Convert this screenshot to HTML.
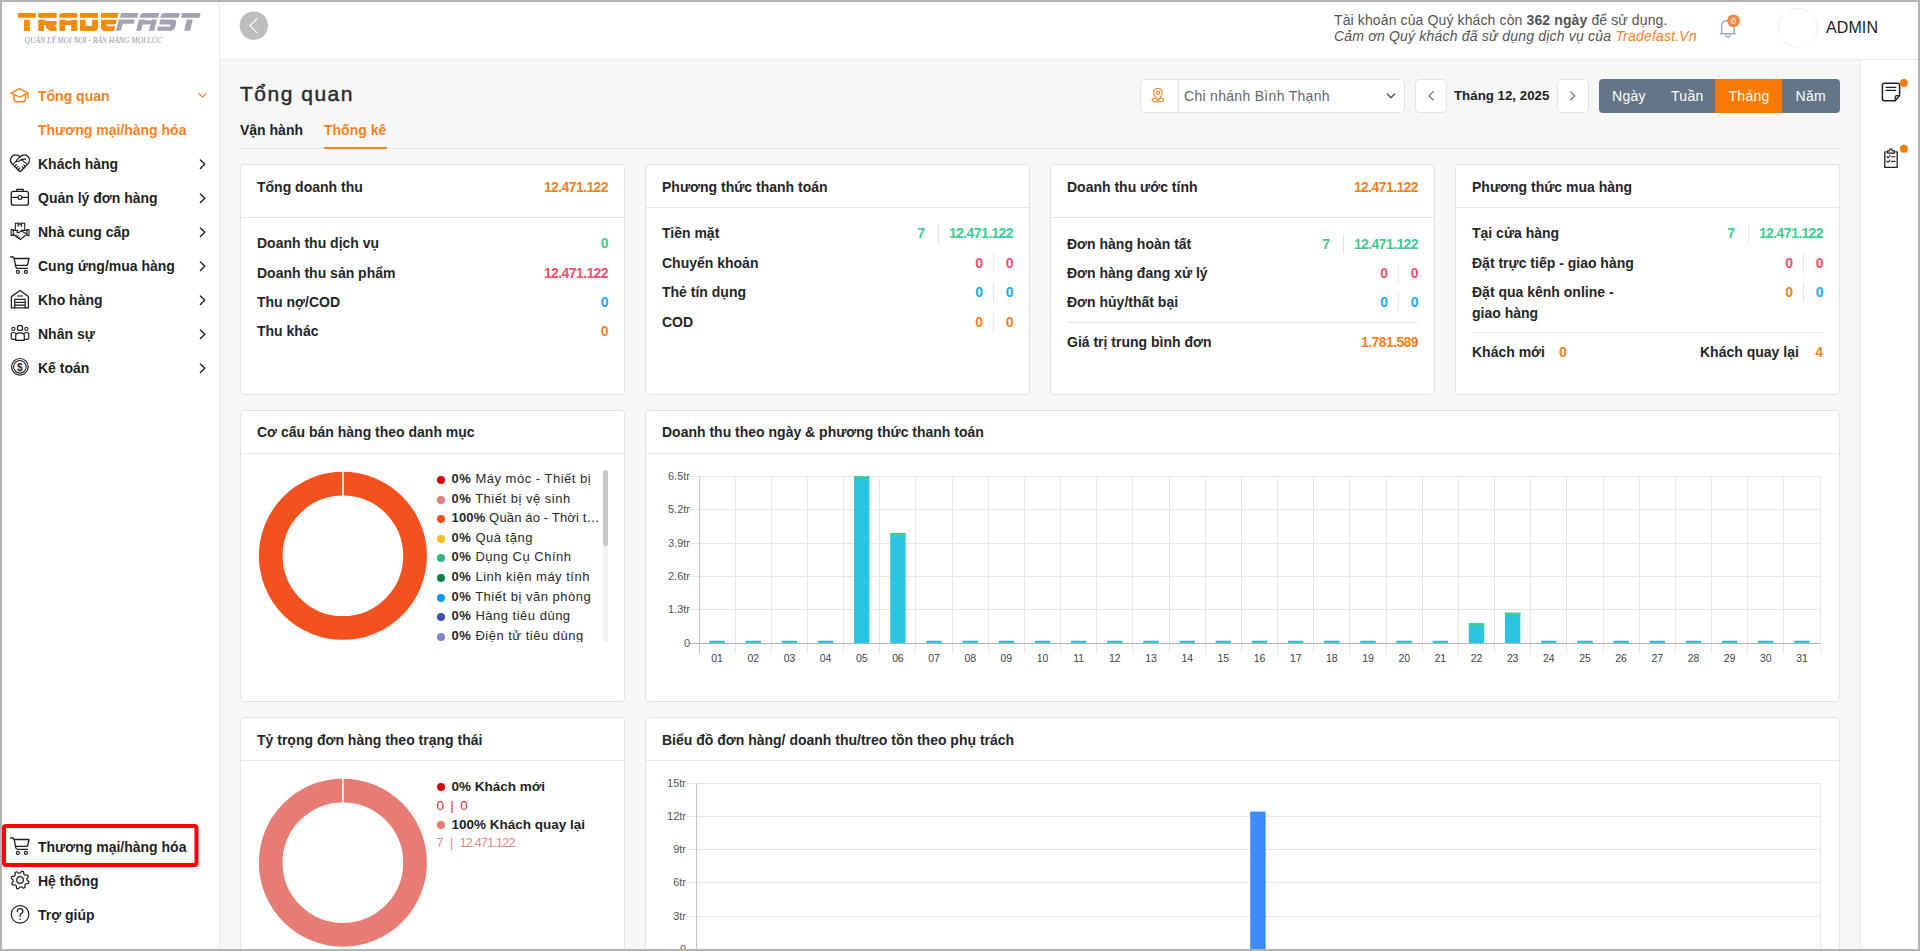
<!DOCTYPE html><html><head><meta charset="utf-8"><style>
*{box-sizing:border-box;margin:0;padding:0}
html,body{width:1920px;height:951px;overflow:hidden;background:#f7f7f7}
body{font-family:"Liberation Sans",sans-serif;color:#222;position:relative}
.a{position:absolute;white-space:nowrap}
.bd{position:absolute;background:#b3b3b3;z-index:50}
.side{position:absolute;left:2px;top:2px;width:218px;height:947px;background:#fff;border-right:1px solid #e9e9e9}
.hdr{position:absolute;left:220px;top:2px;width:1698px;height:58px;background:#fff;border-bottom:1px solid #e9e9e9}
.rside{position:absolute;left:1860px;top:60px;width:58px;height:889px;background:#fff;border-left:1px solid #e9e9e9}
.mi{position:absolute;left:38px;height:34px;line-height:34px;font-size:14px;font-weight:700;color:#1f1f1f;white-space:nowrap}
.card{position:absolute;background:#fff;border:1px solid #e3e3e3;border-radius:4px;overflow:hidden}
.ct{position:absolute;left:15px;font-size:14px;font-weight:700;color:#222;white-space:nowrap;line-height:20px}
.hl{position:absolute;height:1px;background:#e6e6e6}
.lb{position:absolute;font-size:14px;font-weight:700;color:#222;white-space:nowrap;line-height:20px}
.num{position:absolute;font-size:14px;font-weight:700;white-space:nowrap;line-height:20px;letter-spacing:-0.6px}
.vs{position:absolute;width:1px;height:19px;background:#e2e2e2}
.org{color:#f5821f}.grn{color:#3dcc91}.red{color:#f0506e}.blu{color:#1ea7fd}
.yl{position:absolute;font-size:11px;color:#555;line-height:12px;text-align:right;width:40px;white-space:nowrap}
.xl{position:absolute;font-size:10.5px;color:#444;line-height:12px;text-align:center;width:30px;white-space:nowrap;letter-spacing:-0.1px}
.lg{position:absolute;left:451px;font-size:13px;color:#222;white-space:nowrap;line-height:16px}
.lg b{font-weight:700}
</style></head><body>
<div class="bd" style="left:0;top:0;width:1920px;height:2px"></div>
<div class="bd" style="left:0;top:949px;width:1920px;height:2px"></div>
<div class="bd" style="left:0;top:0;width:2px;height:951px"></div>
<div class="bd" style="left:1918px;top:0;width:2px;height:951px"></div>
<div class="side"></div><div class="hdr"></div><div class="rside"></div>
<div class="mi" style="top:79.05px;color:#f5821f">Tổng quan</div>
<div class="mi" style="top:113.35px;color:#f5821f">Thương mại/hàng hóa</div>
<div class="mi" style="top:147.35px">Khách hàng</div>
<div class="mi" style="top:181.35px">Quản lý đơn hàng</div>
<div class="mi" style="top:215.35px">Nhà cung cấp</div>
<div class="mi" style="top:249.35px">Cung ứng/mua hàng</div>
<div class="mi" style="top:283.35px">Kho hàng</div>
<div class="mi" style="top:317.35px">Nhân sự</div>
<div class="mi" style="top:351.35px">Kế toán</div>
<div class="mi" style="top:829.75px">Thương mại/hàng hóa</div>
<div class="mi" style="top:863.85px">Hệ thống</div>
<div class="mi" style="top:898.15px">Trợ giúp</div>
<div class="a" style="left:1334px;top:10.35px;font-size:14px;font-weight:400;color:#555;line-height:20px;letter-spacing:0.12px">Tài khoản của Quý khách còn <b>362 ngày</b> để sử dụng.</div>
<div class="a" style="left:1334px;top:25.95px;font-size:14px;font-weight:400;color:#555;line-height:20px;font-style:italic;letter-spacing:0.2px">Cảm ơn Quý khách đã sử dụng dịch vụ của <span style="color:#f5821f">Tradefast.Vn</span></div>
<div class="a" style="left:1826px;top:17.96px;font-size:16px;font-weight:400;color:#222;line-height:20px;letter-spacing:0.1px">ADMIN</div>
<div class="a" style="left:240px;top:80.82px;font-size:21px;font-weight:400;color:#2b2b2b;line-height:26px;letter-spacing:1.5px;-webkit-text-stroke:0.45px #2b2b2b">Tổng quan</div>
<div class="a" style="left:240px;top:120.05px;font-size:14px;font-weight:700;color:#222;line-height:20px;">Vận hành</div>
<div class="a" style="left:324px;top:120.05px;font-size:14px;font-weight:700;color:#f5821f;line-height:20px;">Thống kê</div>
<div class="a" style="left:240px;top:148px;width:1600px;height:1px;background:#e3e6ea"></div>
<div class="a" style="left:324px;top:147px;width:63px;height:2px;background:#f5821f"></div>
<div class="a" style="left:1140px;top:79px;width:265px;height:34px;background:#fff;border:1px solid #e3e3e3;border-radius:5px"></div>
<div class="a" style="left:1178px;top:80px;width:1px;height:32px;background:#e3e3e3"></div>
<div class="a" style="left:1184px;top:85.55px;font-size:14px;font-weight:400;color:#666;line-height:20px;letter-spacing:0.3px">Chi nhánh Bình Thạnh</div>
<div class="a" style="left:1415px;top:79px;width:32px;height:34px;background:#fff;border:1px solid #e3e3e3;border-radius:5px"></div>
<div class="a" style="left:1557px;top:79px;width:32px;height:34px;background:#fff;border:1px solid #e3e3e3;border-radius:5px"></div>
<div class="a" style="left:1454px;top:86.29px;font-size:13.3px;font-weight:700;color:#222;line-height:20px;">Tháng 12, 2025</div>
<div class="a" style="left:1599px;top:79px;width:241px;height:34px;background:#647587;border-radius:4px"></div>
<div class="a" style="left:1715px;top:79px;width:67px;height:34px;background:#f77a05"></div>
<div class="a" style="left:1612px;top:86.05px;font-size:14px;font-weight:400;color:#fff;line-height:20px;letter-spacing:0.3px">Ngày</div>
<div class="a" style="left:1671px;top:86.05px;font-size:14px;font-weight:400;color:#fff;line-height:20px;letter-spacing:0.3px">Tuần</div>
<div class="a" style="left:1728.5px;top:86.05px;font-size:14px;font-weight:400;color:#fff;line-height:20px;letter-spacing:0.3px">Tháng</div>
<div class="a" style="left:1795.5px;top:86.05px;font-size:14px;font-weight:400;color:#fff;line-height:20px;letter-spacing:0.3px">Năm</div>
<div class="card" style="left:240px;top:164px;width:385px;height:231px"><div class="hl" style="left:0;right:0;top:52px"></div></div>
<div class="card" style="left:645px;top:164px;width:385px;height:231px"><div class="hl" style="left:0;right:0;top:42px"></div></div>
<div class="card" style="left:1050px;top:164px;width:385px;height:231px"><div class="hl" style="left:0;right:0;top:52px"></div></div>
<div class="card" style="left:1455px;top:164px;width:385px;height:231px"><div class="hl" style="left:0;right:0;top:42px"></div></div>
<div class="card" style="left:240px;top:410px;width:385px;height:292px"><div class="hl" style="left:0;right:0;top:42px"></div></div>
<div class="card" style="left:645px;top:410px;width:1195px;height:292px"><div class="hl" style="left:0;right:0;top:42px"></div></div>
<div class="card" style="left:240px;top:717px;width:385px;height:260px"><div class="hl" style="left:0;right:0;top:42px"></div></div>
<div class="card" style="left:645px;top:717px;width:1195px;height:260px"><div class="hl" style="left:0;right:0;top:42px"></div></div>
<div class="a" style="left:257px;top:176.55px;font-size:14px;font-weight:700;color:#262626;line-height:20px;">Tổng doanh thu</div>
<div class="a" style="right:1312px;top:176.55px;font-size:14px;font-weight:700;color:#f5821f;line-height:20px;text-align:right;letter-spacing:-0.6px">12.471.122</div>
<div class="a" style="left:257px;top:233.45px;font-size:14px;font-weight:700;color:#262626;line-height:20px;">Doanh thu dịch vụ</div>
<div class="a" style="right:1312px;top:233.45px;font-size:14px;font-weight:700;color:#3dcc91;line-height:20px;text-align:right;letter-spacing:-0.6px">0</div>
<div class="a" style="left:257px;top:262.75px;font-size:14px;font-weight:700;color:#262626;line-height:20px;">Doanh thu sản phẩm</div>
<div class="a" style="right:1312px;top:262.75px;font-size:14px;font-weight:700;color:#f0506e;line-height:20px;text-align:right;letter-spacing:-0.6px">12.471.122</div>
<div class="a" style="left:257px;top:292.05px;font-size:14px;font-weight:700;color:#262626;line-height:20px;">Thu nợ/COD</div>
<div class="a" style="right:1312px;top:292.05px;font-size:14px;font-weight:700;color:#1ea7fd;line-height:20px;text-align:right;letter-spacing:-0.6px">0</div>
<div class="a" style="left:257px;top:321.35px;font-size:14px;font-weight:700;color:#262626;line-height:20px;">Thu khác</div>
<div class="a" style="right:1312px;top:321.35px;font-size:14px;font-weight:700;color:#f5821f;line-height:20px;text-align:right;letter-spacing:-0.6px">0</div>
<div class="a" style="left:662px;top:176.65px;font-size:14px;font-weight:700;color:#262626;line-height:20px;">Phương thức thanh toán</div>
<div class="a" style="left:662px;top:223.35px;font-size:14px;font-weight:700;color:#262626;line-height:20px;">Tiền mặt</div>
<div class="a" style="right:907px;top:223.35px;font-size:14px;font-weight:700;color:#3dcc91;line-height:20px;text-align:right;letter-spacing:-0.6px">12.471.122</div>
<div class="vs" style="left:938px;top:224.2px"></div>
<div class="a" style="right:995px;top:223.35px;font-size:14px;font-weight:700;color:#3dcc91;line-height:20px;text-align:right;">7</div>
<div class="a" style="left:662px;top:252.85px;font-size:14px;font-weight:700;color:#262626;line-height:20px;">Chuyển khoản</div>
<div class="a" style="right:907px;top:252.85px;font-size:14px;font-weight:700;color:#f0506e;line-height:20px;text-align:right;letter-spacing:-0.6px">0</div>
<div class="vs" style="left:993px;top:253.7px"></div>
<div class="a" style="right:937px;top:252.85px;font-size:14px;font-weight:700;color:#f0506e;line-height:20px;text-align:right;">0</div>
<div class="a" style="left:662px;top:282.35px;font-size:14px;font-weight:700;color:#262626;line-height:20px;">Thẻ tín dụng</div>
<div class="a" style="right:907px;top:282.35px;font-size:14px;font-weight:700;color:#1ea7fd;line-height:20px;text-align:right;letter-spacing:-0.6px">0</div>
<div class="vs" style="left:993px;top:283.2px"></div>
<div class="a" style="right:937px;top:282.35px;font-size:14px;font-weight:700;color:#1ea7fd;line-height:20px;text-align:right;">0</div>
<div class="a" style="left:662px;top:311.85px;font-size:14px;font-weight:700;color:#262626;line-height:20px;">COD</div>
<div class="a" style="right:907px;top:311.85px;font-size:14px;font-weight:700;color:#f5821f;line-height:20px;text-align:right;letter-spacing:-0.6px">0</div>
<div class="vs" style="left:993px;top:312.7px"></div>
<div class="a" style="right:937px;top:311.85px;font-size:14px;font-weight:700;color:#f5821f;line-height:20px;text-align:right;">0</div>
<div class="a" style="left:1067px;top:176.55px;font-size:14px;font-weight:700;color:#262626;line-height:20px;">Doanh thu ước tính</div>
<div class="a" style="right:502px;top:176.55px;font-size:14px;font-weight:700;color:#f5821f;line-height:20px;text-align:right;letter-spacing:-0.6px">12.471.122</div>
<div class="a" style="left:1067px;top:233.55px;font-size:14px;font-weight:700;color:#262626;line-height:20px;">Đơn hàng hoàn tất</div>
<div class="a" style="right:502px;top:233.55px;font-size:14px;font-weight:700;color:#3dcc91;line-height:20px;text-align:right;letter-spacing:-0.6px">12.471.122</div>
<div class="vs" style="left:1343px;top:234.4px"></div>
<div class="a" style="right:590px;top:233.55px;font-size:14px;font-weight:700;color:#3dcc91;line-height:20px;text-align:right;">7</div>
<div class="a" style="left:1067px;top:262.85px;font-size:14px;font-weight:700;color:#262626;line-height:20px;">Đơn hàng đang xử lý</div>
<div class="a" style="right:502px;top:262.85px;font-size:14px;font-weight:700;color:#f0506e;line-height:20px;text-align:right;letter-spacing:-0.6px">0</div>
<div class="vs" style="left:1398px;top:263.7px"></div>
<div class="a" style="right:532px;top:262.85px;font-size:14px;font-weight:700;color:#f0506e;line-height:20px;text-align:right;">0</div>
<div class="a" style="left:1067px;top:292.15px;font-size:14px;font-weight:700;color:#262626;line-height:20px;">Đơn hủy/thất bại</div>
<div class="a" style="right:502px;top:292.15px;font-size:14px;font-weight:700;color:#1ea7fd;line-height:20px;text-align:right;letter-spacing:-0.6px">0</div>
<div class="vs" style="left:1398px;top:293.0px"></div>
<div class="a" style="right:532px;top:292.15px;font-size:14px;font-weight:700;color:#1ea7fd;line-height:20px;text-align:right;">0</div>
<div class="hl" style="left:1067px;top:322px;width:351px;background:#e3e6ea"></div>
<div class="a" style="left:1067px;top:331.95px;font-size:14px;font-weight:700;color:#262626;line-height:20px;">Giá trị trung bình đơn</div>
<div class="a" style="right:502px;top:331.95px;font-size:14px;font-weight:700;color:#f5821f;line-height:20px;text-align:right;letter-spacing:-0.6px">1.781.589</div>
<div class="a" style="left:1472px;top:176.65px;font-size:14px;font-weight:700;color:#262626;line-height:20px;">Phương thức mua hàng</div>
<div class="a" style="left:1472px;top:223.35px;font-size:14px;font-weight:700;color:#262626;line-height:20px;">Tại cửa hàng</div>
<div class="a" style="right:97px;top:223.35px;font-size:14px;font-weight:700;color:#3dcc91;line-height:20px;text-align:right;letter-spacing:-0.6px">12.471.122</div>
<div class="vs" style="left:1748px;top:224.2px"></div>
<div class="a" style="right:185px;top:223.35px;font-size:14px;font-weight:700;color:#3dcc91;line-height:20px;text-align:right;">7</div>
<div class="a" style="left:1472px;top:252.85px;font-size:14px;font-weight:700;color:#262626;line-height:20px;">Đặt trực tiếp - giao hàng</div>
<div class="a" style="right:97px;top:252.85px;font-size:14px;font-weight:700;color:#f0506e;line-height:20px;text-align:right;letter-spacing:-0.6px">0</div>
<div class="vs" style="left:1803px;top:253.7px"></div>
<div class="a" style="right:127px;top:252.85px;font-size:14px;font-weight:700;color:#f0506e;line-height:20px;text-align:right;">0</div>
<div class="a" style="left:1472px;top:282.35px;font-size:14px;font-weight:700;color:#262626;line-height:20px;">Đặt qua kênh online -</div>
<div class="a" style="right:97px;top:282.35px;font-size:14px;font-weight:700;color:#1ea7fd;line-height:20px;text-align:right;letter-spacing:-0.6px">0</div>
<div class="vs" style="left:1803px;top:283.2px"></div>
<div class="a" style="right:127px;top:282.35px;font-size:14px;font-weight:700;color:#f5821f;line-height:20px;text-align:right;">0</div>
<div class="a" style="left:1472px;top:302.65px;font-size:14px;font-weight:700;color:#262626;line-height:20px;">giao hàng</div>
<div class="hl" style="left:1472px;top:332px;width:351px;background:#e3e6ea"></div>
<div class="a" style="left:1472px;top:342.15px;font-size:14px;font-weight:700;color:#262626;line-height:20px;">Khách mới</div>
<div class="a" style="left:1559px;top:342.15px;font-size:14px;font-weight:700;color:#f5821f;line-height:20px;">0</div>
<div class="a" style="left:1700px;top:342.15px;font-size:14px;font-weight:700;color:#262626;line-height:20px;">Khách quay lại</div>
<div class="a" style="right:97px;top:342.15px;font-size:14px;font-weight:700;color:#f5821f;line-height:20px;text-align:right;">4</div>
<div class="a" style="left:257px;top:421.95px;font-size:14px;font-weight:700;color:#262626;line-height:20px;">Cơ cấu bán hàng theo danh mục</div>
<div class="a" style="left:662px;top:421.95px;font-size:14px;font-weight:700;color:#262626;line-height:20px;">Doanh thu theo ngày &amp; phương thức thanh toán</div>
<div class="a" style="left:257px;top:729.55px;font-size:14px;font-weight:700;color:#262626;line-height:20px;">Tỷ trọng đơn hàng theo trạng thái</div>
<div class="a" style="left:662px;top:729.55px;font-size:14px;font-weight:700;color:#262626;line-height:20px;">Biểu đồ đơn hàng/ doanh thu/treo tồn theo phụ trách</div>
<div class="a" style="left:430px;top:466px;width:180px;height:176px;overflow:hidden">
<div class="a" style="left:7px;top:10.0px;width:8px;height:8px;border-radius:50%;background:#d50000"></div>
<div class="a" style="left:21.5px;top:5.00px;font-size:13px;line-height:16px;color:#2a2a2a;letter-spacing:0.5px"><b>0%</b> Máy móc - Thiết bị</div>
<div class="a" style="left:7px;top:29.600000000000023px;width:8px;height:8px;border-radius:50%;background:#e67c73"></div>
<div class="a" style="left:21.5px;top:24.60px;font-size:13px;line-height:16px;color:#2a2a2a;letter-spacing:0.5px"><b>0%</b> Thiết bị vệ sinh</div>
<div class="a" style="left:7px;top:49.200000000000045px;width:8px;height:8px;border-radius:50%;background:#f4511e"></div>
<div class="a" style="left:21.5px;top:44.20px;font-size:13px;line-height:16px;color:#2a2a2a;letter-spacing:0.15px"><b>100%</b> Quần áo - Thời t…</div>
<div class="a" style="left:7px;top:68.79999999999995px;width:8px;height:8px;border-radius:50%;background:#f6bf26"></div>
<div class="a" style="left:21.5px;top:63.80px;font-size:13px;line-height:16px;color:#2a2a2a;letter-spacing:0.5px"><b>0%</b> Quà tặng</div>
<div class="a" style="left:7px;top:88.39999999999998px;width:8px;height:8px;border-radius:50%;background:#33b679"></div>
<div class="a" style="left:21.5px;top:83.40px;font-size:13px;line-height:16px;color:#2a2a2a;letter-spacing:0.5px"><b>0%</b> Dụng Cụ Chính</div>
<div class="a" style="left:7px;top:108.0px;width:8px;height:8px;border-radius:50%;background:#0b8043"></div>
<div class="a" style="left:21.5px;top:103.00px;font-size:13px;line-height:16px;color:#2a2a2a;letter-spacing:0.5px"><b>0%</b> Linh kiện máy tính</div>
<div class="a" style="left:7px;top:127.60000000000002px;width:8px;height:8px;border-radius:50%;background:#039be5"></div>
<div class="a" style="left:21.5px;top:122.60px;font-size:13px;line-height:16px;color:#2a2a2a;letter-spacing:0.5px"><b>0%</b> Thiết bị văn phòng</div>
<div class="a" style="left:7px;top:147.20000000000005px;width:8px;height:8px;border-radius:50%;background:#3f51b5"></div>
<div class="a" style="left:21.5px;top:142.20px;font-size:13px;line-height:16px;color:#2a2a2a;letter-spacing:0.5px"><b>0%</b> Hàng tiêu dùng</div>
<div class="a" style="left:7px;top:166.79999999999995px;width:8px;height:8px;border-radius:50%;background:#7986cb"></div>
<div class="a" style="left:21.5px;top:161.80px;font-size:13px;line-height:16px;color:#2a2a2a;letter-spacing:0.5px"><b>0%</b> Điện tử tiêu dùng</div>
</div>
<div class="a" style="left:603px;top:470px;width:5px;height:172px;background:#f1f1f1;border-radius:3px"></div>
<div class="a" style="left:603px;top:470px;width:5px;height:76px;background:#c8c8c8;border-radius:3px"></div>
<div class="a" style="left:437px;top:783px;width:8px;height:8px;border-radius:50%;background:#d50000"></div>
<div class="a" style="left:451.5px;top:776.52px;font-size:13.5px;font-weight:700;color:#222;line-height:20px;">0% Khách mới</div>
<div class="a" style="left:436.5px;top:796.12px;font-size:13.5px;font-weight:400;color:#de2a3a;line-height:20px;letter-spacing:0.3px;word-spacing:2px">0 | 0</div>
<div class="a" style="left:437px;top:821.3px;width:8px;height:8px;border-radius:50%;background:#e67c73"></div>
<div class="a" style="left:451.5px;top:814.82px;font-size:13.5px;font-weight:700;color:#222;line-height:20px;">100% Khách quay lại</div>
<div class="a" style="left:436.5px;top:833.47px;font-size:12.5px;font-weight:400;color:#e8877f;line-height:20px;letter-spacing:-0.75px;word-spacing:4.5px">7 | 12.471.122</div>
<div class="yl" style="left:650px;top:636.80px;z-index:11">0</div>
<div class="yl" style="left:650px;top:603.40px;z-index:11">1.3tr</div>
<div class="yl" style="left:650px;top:570.00px;z-index:11">2.6tr</div>
<div class="yl" style="left:650px;top:536.60px;z-index:11">3.9tr</div>
<div class="yl" style="left:650px;top:503.20px;z-index:11">5.2tr</div>
<div class="yl" style="left:650px;top:469.80px;z-index:11">6.5tr</div>
<div class="xl" style="left:702.08px;top:651.8px;z-index:11">01</div>
<div class="xl" style="left:738.24px;top:651.8px;z-index:11">02</div>
<div class="xl" style="left:774.40px;top:651.8px;z-index:11">03</div>
<div class="xl" style="left:810.56px;top:651.8px;z-index:11">04</div>
<div class="xl" style="left:846.73px;top:651.8px;z-index:11">05</div>
<div class="xl" style="left:882.89px;top:651.8px;z-index:11">06</div>
<div class="xl" style="left:919.05px;top:651.8px;z-index:11">07</div>
<div class="xl" style="left:955.21px;top:651.8px;z-index:11">08</div>
<div class="xl" style="left:991.37px;top:651.8px;z-index:11">09</div>
<div class="xl" style="left:1027.53px;top:651.8px;z-index:11">10</div>
<div class="xl" style="left:1063.69px;top:651.8px;z-index:11">11</div>
<div class="xl" style="left:1099.85px;top:651.8px;z-index:11">12</div>
<div class="xl" style="left:1136.02px;top:651.8px;z-index:11">13</div>
<div class="xl" style="left:1172.18px;top:651.8px;z-index:11">14</div>
<div class="xl" style="left:1208.34px;top:651.8px;z-index:11">15</div>
<div class="xl" style="left:1244.50px;top:651.8px;z-index:11">16</div>
<div class="xl" style="left:1280.66px;top:651.8px;z-index:11">17</div>
<div class="xl" style="left:1316.82px;top:651.8px;z-index:11">18</div>
<div class="xl" style="left:1352.98px;top:651.8px;z-index:11">19</div>
<div class="xl" style="left:1389.15px;top:651.8px;z-index:11">20</div>
<div class="xl" style="left:1425.31px;top:651.8px;z-index:11">21</div>
<div class="xl" style="left:1461.47px;top:651.8px;z-index:11">22</div>
<div class="xl" style="left:1497.63px;top:651.8px;z-index:11">23</div>
<div class="xl" style="left:1533.79px;top:651.8px;z-index:11">24</div>
<div class="xl" style="left:1569.95px;top:651.8px;z-index:11">25</div>
<div class="xl" style="left:1606.11px;top:651.8px;z-index:11">26</div>
<div class="xl" style="left:1642.27px;top:651.8px;z-index:11">27</div>
<div class="xl" style="left:1678.44px;top:651.8px;z-index:11">28</div>
<div class="xl" style="left:1714.60px;top:651.8px;z-index:11">29</div>
<div class="xl" style="left:1750.76px;top:651.8px;z-index:11">30</div>
<div class="xl" style="left:1786.92px;top:651.8px;z-index:11">31</div>
<div class="yl" style="left:646px;top:942.70px;z-index:11">0</div>
<div class="yl" style="left:646px;top:909.54px;z-index:11">3tr</div>
<div class="yl" style="left:646px;top:876.38px;z-index:11">6tr</div>
<div class="yl" style="left:646px;top:843.22px;z-index:11">9tr</div>
<div class="yl" style="left:646px;top:810.06px;z-index:11">12tr</div>
<div class="yl" style="left:646px;top:776.90px;z-index:11">15tr</div>
<svg class="a" style="left:0;top:0;z-index:10" width="1920" height="951" viewBox="0 0 1920 951"><circle cx="342.9" cy="555.8" r="72.15" fill="none" stroke="#f4511e" stroke-width="23.7"/><line x1="342.9" y1="471.29999999999995" x2="342.9" y2="496.29999999999995" stroke="#fff" stroke-width="1.6"/><circle cx="342.9" cy="862.7" r="72.15" fill="none" stroke="#e67c73" stroke-width="23.7"/><line x1="342.9" y1="778.2" x2="342.9" y2="803.2" stroke="#fff" stroke-width="1.6"/><line x1="689" y1="643.5" x2="1820.5" y2="643.5" stroke="#b8b8b8" stroke-width="1"/><line x1="689" y1="609.5" x2="1820.5" y2="609.5" stroke="#e6e6e6" stroke-width="1"/><line x1="689" y1="576.5" x2="1820.5" y2="576.5" stroke="#e6e6e6" stroke-width="1"/><line x1="689" y1="543.5" x2="1820.5" y2="543.5" stroke="#e6e6e6" stroke-width="1"/><line x1="689" y1="509.5" x2="1820.5" y2="509.5" stroke="#e6e6e6" stroke-width="1"/><line x1="689" y1="476.5" x2="1820.5" y2="476.5" stroke="#e6e6e6" stroke-width="1"/><line x1="699.5" y1="476.5" x2="699.5" y2="653.3" stroke="#e6e6e6" stroke-width="1"/><line x1="735.5" y1="476.5" x2="735.5" y2="653.3" stroke="#e6e6e6" stroke-width="1"/><line x1="771.5" y1="476.5" x2="771.5" y2="653.3" stroke="#e6e6e6" stroke-width="1"/><line x1="807.5" y1="476.5" x2="807.5" y2="653.3" stroke="#e6e6e6" stroke-width="1"/><line x1="843.5" y1="476.5" x2="843.5" y2="653.3" stroke="#e6e6e6" stroke-width="1"/><line x1="879.5" y1="476.5" x2="879.5" y2="653.3" stroke="#e6e6e6" stroke-width="1"/><line x1="915.5" y1="476.5" x2="915.5" y2="653.3" stroke="#e6e6e6" stroke-width="1"/><line x1="952.5" y1="476.5" x2="952.5" y2="653.3" stroke="#e6e6e6" stroke-width="1"/><line x1="988.5" y1="476.5" x2="988.5" y2="653.3" stroke="#e6e6e6" stroke-width="1"/><line x1="1024.5" y1="476.5" x2="1024.5" y2="653.3" stroke="#e6e6e6" stroke-width="1"/><line x1="1060.5" y1="476.5" x2="1060.5" y2="653.3" stroke="#e6e6e6" stroke-width="1"/><line x1="1096.5" y1="476.5" x2="1096.5" y2="653.3" stroke="#e6e6e6" stroke-width="1"/><line x1="1132.5" y1="476.5" x2="1132.5" y2="653.3" stroke="#e6e6e6" stroke-width="1"/><line x1="1169.5" y1="476.5" x2="1169.5" y2="653.3" stroke="#e6e6e6" stroke-width="1"/><line x1="1205.5" y1="476.5" x2="1205.5" y2="653.3" stroke="#e6e6e6" stroke-width="1"/><line x1="1241.5" y1="476.5" x2="1241.5" y2="653.3" stroke="#e6e6e6" stroke-width="1"/><line x1="1277.5" y1="476.5" x2="1277.5" y2="653.3" stroke="#e6e6e6" stroke-width="1"/><line x1="1313.5" y1="476.5" x2="1313.5" y2="653.3" stroke="#e6e6e6" stroke-width="1"/><line x1="1349.5" y1="476.5" x2="1349.5" y2="653.3" stroke="#e6e6e6" stroke-width="1"/><line x1="1386.5" y1="476.5" x2="1386.5" y2="653.3" stroke="#e6e6e6" stroke-width="1"/><line x1="1422.5" y1="476.5" x2="1422.5" y2="653.3" stroke="#e6e6e6" stroke-width="1"/><line x1="1458.5" y1="476.5" x2="1458.5" y2="653.3" stroke="#e6e6e6" stroke-width="1"/><line x1="1494.5" y1="476.5" x2="1494.5" y2="653.3" stroke="#e6e6e6" stroke-width="1"/><line x1="1530.5" y1="476.5" x2="1530.5" y2="653.3" stroke="#e6e6e6" stroke-width="1"/><line x1="1566.5" y1="476.5" x2="1566.5" y2="653.3" stroke="#e6e6e6" stroke-width="1"/><line x1="1603.5" y1="476.5" x2="1603.5" y2="653.3" stroke="#e6e6e6" stroke-width="1"/><line x1="1639.5" y1="476.5" x2="1639.5" y2="653.3" stroke="#e6e6e6" stroke-width="1"/><line x1="1675.5" y1="476.5" x2="1675.5" y2="653.3" stroke="#e6e6e6" stroke-width="1"/><line x1="1711.5" y1="476.5" x2="1711.5" y2="653.3" stroke="#e6e6e6" stroke-width="1"/><line x1="1747.5" y1="476.5" x2="1747.5" y2="653.3" stroke="#e6e6e6" stroke-width="1"/><line x1="1783.5" y1="476.5" x2="1783.5" y2="653.3" stroke="#e6e6e6" stroke-width="1"/><line x1="1820.5" y1="476.5" x2="1820.5" y2="653.3" stroke="#e6e6e6" stroke-width="1"/><line x1="699.5" y1="476.5" x2="699.5" y2="653.3" stroke="#c4c4c4" stroke-width="1"/><rect x="709.38" y="640.70" width="15.4" height="2.60" fill="#29c5e1"/><rect x="745.54" y="640.70" width="15.4" height="2.60" fill="#29c5e1"/><rect x="781.70" y="640.70" width="15.4" height="2.60" fill="#29c5e1"/><rect x="817.86" y="640.70" width="15.4" height="2.60" fill="#29c5e1"/><rect x="854.03" y="476.30" width="15.4" height="167.00" fill="#29c5e1"/><rect x="854.03" y="476.30" width="15.4" height="2.3" fill="#3ecf8e"/><rect x="890.19" y="533.08" width="15.4" height="110.22" fill="#29c5e1"/><rect x="890.19" y="533.08" width="15.4" height="2.3" fill="#3ecf8e"/><rect x="926.35" y="640.70" width="15.4" height="2.60" fill="#29c5e1"/><rect x="962.51" y="640.70" width="15.4" height="2.60" fill="#29c5e1"/><rect x="998.67" y="640.70" width="15.4" height="2.60" fill="#29c5e1"/><rect x="1034.83" y="640.70" width="15.4" height="2.60" fill="#29c5e1"/><rect x="1070.99" y="640.70" width="15.4" height="2.60" fill="#29c5e1"/><rect x="1107.15" y="640.70" width="15.4" height="2.60" fill="#29c5e1"/><rect x="1143.32" y="640.70" width="15.4" height="2.60" fill="#29c5e1"/><rect x="1179.48" y="640.70" width="15.4" height="2.60" fill="#29c5e1"/><rect x="1215.64" y="640.70" width="15.4" height="2.60" fill="#29c5e1"/><rect x="1251.80" y="640.70" width="15.4" height="2.60" fill="#29c5e1"/><rect x="1287.96" y="640.70" width="15.4" height="2.60" fill="#29c5e1"/><rect x="1324.12" y="640.70" width="15.4" height="2.60" fill="#29c5e1"/><rect x="1360.28" y="640.70" width="15.4" height="2.60" fill="#29c5e1"/><rect x="1396.45" y="640.70" width="15.4" height="2.60" fill="#29c5e1"/><rect x="1432.61" y="640.70" width="15.4" height="2.60" fill="#29c5e1"/><rect x="1468.77" y="623.26" width="15.4" height="20.04" fill="#29c5e1"/><rect x="1468.77" y="623.26" width="15.4" height="2.3" fill="#3ecf8e"/><rect x="1504.93" y="612.73" width="15.4" height="30.57" fill="#29c5e1"/><rect x="1504.93" y="612.73" width="15.4" height="2.3" fill="#3ecf8e"/><rect x="1541.09" y="640.70" width="15.4" height="2.60" fill="#29c5e1"/><rect x="1577.25" y="640.70" width="15.4" height="2.60" fill="#29c5e1"/><rect x="1613.41" y="640.70" width="15.4" height="2.60" fill="#29c5e1"/><rect x="1649.57" y="640.70" width="15.4" height="2.60" fill="#29c5e1"/><rect x="1685.74" y="640.70" width="15.4" height="2.60" fill="#29c5e1"/><rect x="1721.90" y="640.70" width="15.4" height="2.60" fill="#29c5e1"/><rect x="1758.06" y="640.70" width="15.4" height="2.60" fill="#29c5e1"/><rect x="1794.22" y="640.70" width="15.4" height="2.60" fill="#29c5e1"/><line x1="689" y1="643.5" x2="1820.5" y2="643.5" stroke="#b4b4b4" stroke-width="1"/><line x1="686" y1="949.5" x2="1820.5" y2="949.5" stroke="#e6e6e6" stroke-width="1"/><line x1="686" y1="916.5" x2="1820.5" y2="916.5" stroke="#e6e6e6" stroke-width="1"/><line x1="686" y1="882.5" x2="1820.5" y2="882.5" stroke="#e6e6e6" stroke-width="1"/><line x1="686" y1="849.5" x2="1820.5" y2="849.5" stroke="#e6e6e6" stroke-width="1"/><line x1="686" y1="816.5" x2="1820.5" y2="816.5" stroke="#e6e6e6" stroke-width="1"/><line x1="686" y1="783.5" x2="1820.5" y2="783.5" stroke="#e6e6e6" stroke-width="1"/><line x1="696.5" y1="783.5" x2="696.5" y2="951" stroke="#c4c4c4" stroke-width="1"/><line x1="1820.5" y1="783.5" x2="1820.5" y2="951" stroke="#e6e6e6" stroke-width="1"/><rect x="1250.2" y="811.6" width="15.4" height="140" fill="#3d8bfd"/><path d="M11.2 93.1 L19.6 88.6 L27.9 93.1 L19.6 97.2 Z" fill="none" stroke="#f5821f" stroke-width="1.4" stroke-linecap="round" stroke-linejoin="round" /><path d="M13.8 94.6 V99.6 Q13.8 101.7 16.5 101.7 H22.8 Q25.4 101.7 25.4 99.6 V94.6" fill="none" stroke="#f5821f" stroke-width="1.4" stroke-linecap="round" stroke-linejoin="round" /><path d="M27.9 93.1 V98.3" fill="none" stroke="#f5821f" stroke-width="1.4" stroke-linecap="round" stroke-linejoin="round" /><path d="M20 156.8 C17.5 154.2 13.5 154.2 11.6 156.8 C9.9 159.2 10.6 162.3 12.6 164.4 L19.2 171 C19.7 171.5 20.4 171.5 20.9 171 L27.4 164.4 C29.6 162.2 30.1 159 28.4 156.8 C26.5 154.3 22.5 154.3 20 156.8 Z" fill="none" stroke="#1f1f1f" stroke-width="1.3" stroke-linecap="round" stroke-linejoin="round" /><path d="M20 156.8 L16.6 160.2 C16 160.8 16.4 161.7 17.2 161.6 C18.6 161.4 20.3 160.5 21.3 159.6 L25.6 159.2" fill="none" stroke="#1f1f1f" stroke-width="1.2" stroke-linecap="round" stroke-linejoin="round" /><path d="M12.6 164.4 L16.8 160.8 M21.3 159.6 L27.4 164.4 M14.6 166.4 L16.4 164.6 M16.3 168.1 L18.1 166.3 M18.0 169.8 L19.8 168 M22.2 166.6 L23.9 168.3 M23.8 165.0 L25.5 166.7" fill="none" stroke="#1f1f1f" stroke-width="1.1" stroke-linecap="round" stroke-linejoin="round" /><path d="M13.3 191.4 H26.4 Q28.4 191.4 28.4 193.4 V203.2 Q28.4 205.2 26.4 205.2 H13.3 Q11.3 205.2 11.3 203.2 V193.4 Q11.3 191.4 13.3 191.4 Z" fill="none" stroke="#1f1f1f" stroke-width="1.3" stroke-linecap="round" stroke-linejoin="round" /><path d="M16.8 191.4 V189.4 H23.2 V191.4" fill="none" stroke="#1f1f1f" stroke-width="1.3" stroke-linecap="round" stroke-linejoin="round" /><path d="M11.3 197.4 H17.9 M21.9 197.4 H28.4" fill="none" stroke="#1f1f1f" stroke-width="1.3" stroke-linecap="round" stroke-linejoin="round" /><circle cx="19.9" cy="197.4" r="1.9" fill="none" stroke="#1f1f1f" stroke-width="1.2"/><path d="M15.3 230 V223.3 H24.7 V230" fill="none" stroke="#1f1f1f" stroke-width="1.1" stroke-linecap="round" stroke-linejoin="round" /><path d="M18.1 223.3 V226.3 M21.6 223.3 V226.3 M18.1 224.8 H21.6" fill="none" stroke="#1f1f1f" stroke-width="1" stroke-linecap="round" stroke-linejoin="round" /><path d="M11.1 229.6 H13.3 V235.4 H11.1 Z M26.9 229.6 H29 V235.4 H26.9 Z" fill="none" stroke="#1f1f1f" stroke-width="1.1" stroke-linecap="round" stroke-linejoin="round" /><path d="M13.3 230.4 H18 L16.8 232 C17.6 232.8 19 232.6 20.2 231.8 L21.4 231 L26.9 234 M26.9 230.4 H21.2" fill="none" stroke="#1f1f1f" stroke-width="1.1" stroke-linecap="round" stroke-linejoin="round" /><path d="M13.3 234.2 L20.4 239.6 L25.4 235.2" fill="none" stroke="#1f1f1f" stroke-width="1.2" stroke-linecap="round" stroke-linejoin="round" /><path d="M15.2 236.3 L17 234.6 M16.7 237.5 L18.5 235.8 M18.2 238.6 L20 236.9" fill="none" stroke="#1f1f1f" stroke-width="1" stroke-linecap="round" stroke-linejoin="round" /><path d="M10.4 257 Q13.2 256 14.2 258.5 L15.8 266.8 Q16.2 268.4 18 268.4 H27.4" fill="none" stroke="#1f1f1f" stroke-width="1.3" stroke-linecap="round" stroke-linejoin="round" /><path d="M14.2 258.5 H29 L27.8 264 Q27.4 265.4 26 265.4 H15.4" fill="none" stroke="#1f1f1f" stroke-width="1.3" stroke-linecap="round" stroke-linejoin="round" /><circle cx="17.9" cy="271.9" r="1.5" fill="none" stroke="#1f1f1f" stroke-width="1.2"/><circle cx="25.9" cy="271.9" r="1.5" fill="none" stroke="#1f1f1f" stroke-width="1.2"/><path d="M10.4 838 Q13.2 837 14.2 839.5 L15.8 847.8 Q16.2 849.4 18 849.4 H27.4" fill="none" stroke="#1f1f1f" stroke-width="1.3" stroke-linecap="round" stroke-linejoin="round" /><path d="M14.2 839.5 H29 L27.8 845 Q27.4 846.4 26 846.4 H15.4" fill="none" stroke="#1f1f1f" stroke-width="1.3" stroke-linecap="round" stroke-linejoin="round" /><circle cx="17.9" cy="852.9" r="1.5" fill="none" stroke="#1f1f1f" stroke-width="1.2"/><circle cx="25.9" cy="852.9" r="1.5" fill="none" stroke="#1f1f1f" stroke-width="1.2"/><path d="M11.4 307.9 V296.6 L20.1 290.5 L28.4 296.6 V307.9 Z" fill="none" stroke="#1f1f1f" stroke-width="1.3" stroke-linecap="round" stroke-linejoin="round" /><path d="M14.7 307.9 V299.4 H25.2 V307.9 M14.7 302.4 H25.2 M14.7 305.2 H25.2" fill="none" stroke="#1f1f1f" stroke-width="1.2" stroke-linecap="round" stroke-linejoin="round" /><path d="M17.6 296 H22.4" fill="none" stroke="#555" stroke-width="1.4" stroke-linecap="round" stroke-linejoin="round" /><circle cx="20" cy="327.9" r="2.6" fill="none" stroke="#1f1f1f" stroke-width="1.2"/><circle cx="13.4" cy="328.9" r="1.6" fill="none" stroke="#1f1f1f" stroke-width="1.1"/><circle cx="26.4" cy="328.9" r="1.6" fill="none" stroke="#1f1f1f" stroke-width="1.1"/><path d="M15.7 340.4 V335.6 Q15.7 332.8 20 332.8 Q24.3 332.8 24.3 335.6 V340.4 Z" fill="none" stroke="#1f1f1f" stroke-width="1.2" stroke-linecap="round" stroke-linejoin="round" /><path d="M15.7 339.3 H12.4 Q11.2 339.3 11.2 338 V334.3 Q11.2 332.5 13.4 332.5 Q15 332.5 15.7 333.5 M24.3 339.3 H27.6 Q28.8 339.3 28.8 338 V334.3 Q28.8 332.5 26.6 332.5 Q25 332.5 24.3 333.5" fill="none" stroke="#1f1f1f" stroke-width="1.2" stroke-linecap="round" stroke-linejoin="round" /><circle cx="19.9" cy="366.8" r="8.3" fill="none" stroke="#1f1f1f" stroke-width="1.2"/><circle cx="19.9" cy="366.8" r="6.3" fill="none" stroke="#1f1f1f" stroke-width="1.1"/><text x="19.9" y="370.6" font-family="Liberation Sans" font-weight="700" font-size="10" text-anchor="middle" fill="#1f1f1f">$</text><path d="M20.05 873.10 L21.81 871.17 L23.49 871.69 L23.88 874.26 L24.93 875.12 L27.53 875.00 L28.36 876.56 L26.82 878.65 L26.95 880.00 L28.88 881.76 L28.36 883.44 L25.79 883.83 L24.93 884.88 L25.05 887.48 L23.49 888.31 L21.40 886.77 L20.05 886.90 L18.29 888.83 L16.61 888.31 L16.22 885.74 L15.17 884.88 L12.57 885.00 L11.74 883.44 L13.28 881.35 L13.15 880.00 L11.22 878.24 L11.74 876.56 L14.31 876.17 L15.17 875.12 L15.05 872.52 L16.61 871.69 L18.70 873.23 Z" fill="none" stroke="#1f1f1f" stroke-width="1.2" stroke-linecap="round" stroke-linejoin="round" /><circle cx="20.05" cy="880" r="3.3" fill="none" stroke="#1f1f1f" stroke-width="1.2"/><circle cx="20.05" cy="914.4" r="8.8" fill="none" stroke="#1f1f1f" stroke-width="1.2"/><path d="M17.3 911.6 Q17.3 908.6 20.1 908.6 Q22.9 908.6 22.9 911.3 Q22.9 913 21 913.8 Q20.1 914.3 20.1 915.8 V916.6" fill="none" stroke="#1f1f1f" stroke-width="1.3" stroke-linecap="round" stroke-linejoin="round" /><circle cx="20.1" cy="919.2" r="0.8" fill="#1f1f1f"/><path d="M198.8 93.4 L202.5 97.2 L206.2 93.4" fill="none" stroke="#f5821f" stroke-width="1.1" stroke-linecap="round" stroke-linejoin="round" /><path d="M200.4 160.10 L204.8 164.30 L200.4 168.50" fill="none" stroke="#1f1f1f" stroke-width="1.4" stroke-linecap="round" stroke-linejoin="round" /><path d="M200.4 194.10 L204.8 198.30 L200.4 202.50" fill="none" stroke="#1f1f1f" stroke-width="1.4" stroke-linecap="round" stroke-linejoin="round" /><path d="M200.4 228.10 L204.8 232.30 L200.4 236.50" fill="none" stroke="#1f1f1f" stroke-width="1.4" stroke-linecap="round" stroke-linejoin="round" /><path d="M200.4 262.10 L204.8 266.30 L200.4 270.50" fill="none" stroke="#1f1f1f" stroke-width="1.4" stroke-linecap="round" stroke-linejoin="round" /><path d="M200.4 296.10 L204.8 300.30 L200.4 304.50" fill="none" stroke="#1f1f1f" stroke-width="1.4" stroke-linecap="round" stroke-linejoin="round" /><path d="M200.4 330.10 L204.8 334.30 L200.4 338.50" fill="none" stroke="#1f1f1f" stroke-width="1.4" stroke-linecap="round" stroke-linejoin="round" /><path d="M200.4 364.10 L204.8 368.30 L200.4 372.50" fill="none" stroke="#1f1f1f" stroke-width="1.4" stroke-linecap="round" stroke-linejoin="round" /><rect x="4" y="825.9" width="192.5" height="39.1" rx="2" fill="none" stroke="#fe0000" stroke-width="4"/><circle cx="253.8" cy="25.6" r="14.2" fill="#bdbdbd"/><path d="M256.8 18.8 L249.8 25.6 L256.8 32.6" fill="none" stroke="#fff" stroke-width="1.3" stroke-linecap="round" stroke-linejoin="round" /><path d="M1721.6 33.6 V26.2 Q1721.6 20.5 1727.9 20.5 Q1734.2 20.5 1734.2 26.2 V33.6" fill="none" stroke="#9cabc2" stroke-width="1.4" stroke-linecap="round" stroke-linejoin="round" /><path d="M1720.6 33.8 H1735.2" fill="none" stroke="#9cabc2" stroke-width="1.6" stroke-linecap="round" stroke-linejoin="round" /><path d="M1725.7 34.8 Q1725.9 37.2 1727.9 37.2 Q1729.9 37.2 1730.1 34.8" fill="none" stroke="#9cabc2" stroke-width="1.3" stroke-linecap="round" stroke-linejoin="round" /><circle cx="1733.5" cy="20.8" r="6.4" fill="#ef8b47"/><text x="1733.5" y="24.1" font-family="Liberation Sans" font-size="9" text-anchor="middle" fill="#fff">0</text><circle cx="1798" cy="27.8" r="19.5" fill="#fff" stroke="#eceef2" stroke-width="1"/><path d="M1158 100.6 L1154.7 96 Q1153.7 94.5 1153.7 92.8 Q1153.7 88.5 1158 88.5 Q1162.3 88.5 1162.3 92.8 Q1162.3 94.5 1161.3 96 Z" fill="none" stroke="#f5821f" stroke-width="1.1" stroke-linecap="round" stroke-linejoin="round" /><circle cx="1158" cy="92.8" r="1.6" fill="none" stroke="#f5821f" stroke-width="1.1"/><path d="M1155.4 98.3 Q1152.1 98.7 1152.1 100 Q1152.1 101.9 1158 101.9 Q1163.9 101.9 1163.9 100 Q1163.9 98.7 1160.6 98.3" fill="none" stroke="#f5821f" stroke-width="1.1" stroke-linecap="round" stroke-linejoin="round" /><path d="M1387.2 94 L1391 97.8 L1394.8 94" fill="none" stroke="#555" stroke-width="1.4" stroke-linecap="round" stroke-linejoin="round" /><path d="M1433.3 91.6 L1429 95.8 L1433.3 100" fill="none" stroke="#666" stroke-width="1.1" stroke-linecap="round" stroke-linejoin="round" /><path d="M1570.5 91.6 L1574.8 95.8 L1570.5 100" fill="none" stroke="#666" stroke-width="1.1" stroke-linecap="round" stroke-linejoin="round" /><path d="M1884.3 83.2 H1897.6 Q1899.6 83.2 1899.6 85.2 V95.6 L1895.2 100.8 H1884.3 Q1882.4 100.8 1882.4 98.8 V85.2 Q1882.4 83.2 1884.3 83.2 Z" fill="none" stroke="#1f1f1f" stroke-width="1.5" stroke-linecap="round" stroke-linejoin="round" /><path d="M1899.6 95.6 H1897 Q1895.2 95.6 1895.2 97.4 V100.8" fill="none" stroke="#1f1f1f" stroke-width="1.3" stroke-linecap="round" stroke-linejoin="round" /><path d="M1886.2 87.4 H1895.6 M1886.2 90.4 H1895.6" fill="none" stroke="#1f1f1f" stroke-width="1.3" stroke-linecap="round" stroke-linejoin="round" /><circle cx="1903.9" cy="83" r="4" fill="#f77a05"/><path d="M1886.2 151.8 H1884.8 V167.4 H1897.2 V151.8 H1895.8" fill="none" stroke="#1f1f1f" stroke-width="1.3" stroke-linecap="round" stroke-linejoin="round" /><path d="M1887.6 153.2 V150.8 H1889.6 Q1889.8 148.6 1891 148.6 Q1892.2 148.6 1892.4 150.8 H1894.4 V153.2 Z" fill="none" stroke="#1f1f1f" stroke-width="1.2" stroke-linecap="round" stroke-linejoin="round" /><path d="M1886.8 156.6 L1888 157.8 L1890 155.6 M1891.6 156.8 H1895 M1886.8 161.2 L1888 162.4 L1890 160.2 M1891.6 161.4 H1895" fill="none" stroke="#1f1f1f" stroke-width="1.1" stroke-linecap="round" stroke-linejoin="round" /><circle cx="1903.9" cy="148.8" r="4" fill="#f77a05"/><path d="M18 12.9 H35.8 V17.8 H18 Z M23.9 19.7 H29.8 V31.0 H23.9 Z" fill="#f58a07"/><path d="M38.3 12.9 H56.6 V17.8 H38.3 Z" fill="#f58a07"/><path d="M38.3 19.7 H44.2 Q45.5 20.9 47.5 20.9 H56.6 V23.4 Q56.6 25.4 53.2 25.9 L56.6 26.5 V31.0 H51.5 Q46.8 31.0 45.6 25.3 H43.9 V31.0 H38.3 Z" fill="#f58a07"/><path d="M62.6 12.9 H77.2 V17.8 H59.4 V16.1 Q59.4 12.9 62.6 12.9 Z" fill="#f58a07"/><path d="M59.4 19.7 H65 Q66.2 20.8 68 20.8 H71.2 V19.7 H77.2 V31.0 H71.2 V25.1 H65 V31.0 H59.4 Z" fill="#f58a07"/><path d="M80 12.9 H98 V17.8 H80 Z" fill="#f58a07"/><path d="M80 19.7 H85.6 V25.9 H92.1 V19.7 H98 V27 Q98 31.0 94 31.0 H80 Z" fill="#f58a07"/><path d="M101 12.9 H118.6 L117.4 17.8 H101 Z" fill="#f58a07"/><path d="M101 19.7 H116.9 L115.8 24.25 H106.5 V26.3 H115.3 L114.1 31.0 H105 Q101 31.0 101 27 Z" fill="#f58a07"/><g transform="matrix(1 0 -0.25 1 7.7 0)"><path d="M116.6 13.1 H134 V17.7 H116.6 Z" fill="#a2a5b1"/><path d="M116 19.6 H132 V23.7 H121 V30.8 H116 Z" fill="#a2a5b1"/><path d="M139.6 13.1 H154.8 V17.7 H136.2 V16.4 Q136.2 13.1 139.6 13.1 Z" fill="#a2a5b1"/><path d="M136.2 19.6 H141.6 Q142.8 20.6 144.4 20.6 H148.8 V19.6 H154.1 V30.8 H148.8 V24.6 H141 V30.8 H136.2 Z" fill="#a2a5b1"/><path d="M160.4 13.1 H175.4 V17.7 H157 V16.4 Q157 13.1 160.4 13.1 Z" fill="#a2a5b1"/><path d="M157.6 19.6 H170.6 Q174.2 19.6 174.2 23.6 V27 Q174.2 30.8 170.2 30.8 H157 V26.5 H168.8 V24.4 H157.6 Z" fill="#a2a5b1"/><path d="M177.8 13.1 H196.2 V17.7 H177.8 Z" fill="#a2a5b1"/><path d="M184.2 19.6 H190 V30.8 H184.2 Z" fill="#a2a5b1"/></g><text x="24.6" y="43.4" font-family="Liberation Serif" font-style="italic" font-size="7.5" fill="#8f97aa" textLength="137.4" lengthAdjust="spacingAndGlyphs">QUẢN LÝ MỌI NƠI - BÁN HÀNG MỌI LÚC</text></svg>
</body></html>
